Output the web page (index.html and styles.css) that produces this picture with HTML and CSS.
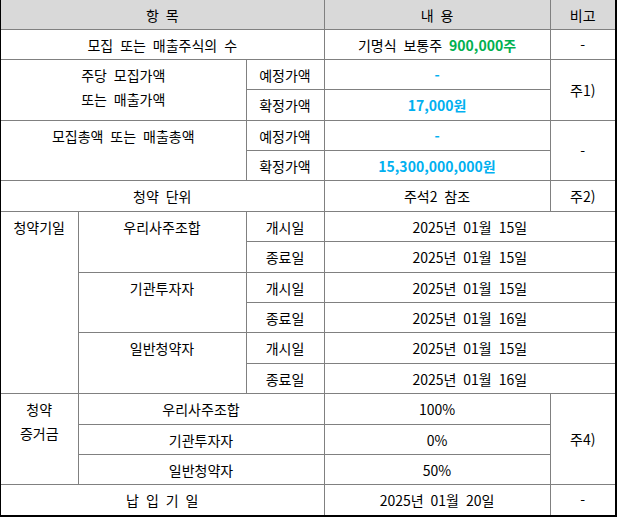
FILE: index.html
```html
<!DOCTYPE html>
<html lang="ko">
<head>
<meta charset="utf-8">
<title>모집 또는 매출에 관한 일반사항</title>
<link rel="stylesheet" href="styles.css">
</head>
<body>
<div class="sheet">
<table class="grid">
  <colgroup>
    <col class="c1"><col class="c2"><col class="c3"><col class="c4"><col class="c5">
  </colgroup>
  <tr class="head">
    <th colspan="3">항 목</th>
    <th>내 용</th>
    <th>비고</th>
  </tr>
  <tr>
    <td colspan="3">모집 또는 매출주식의 수</td>
    <td>기명식 보통주 <span class="green">900,000주</span></td>
    <td>-</td>
  </tr>
  <tr>
    <td colspan="2" rowspan="2">주당 모집가액<br>또는 매출가액</td>
    <td>예정가액</td>
    <td><span class="blue">-</span></td>
    <td rowspan="2" class="mid">주1)</td>
  </tr>
  <tr>
    <td>확정가액</td>
    <td><span class="blue">17,000원</span></td>
  </tr>
  <tr>
    <td colspan="2" rowspan="2">모집총액 또는 매출총액</td>
    <td>예정가액</td>
    <td><span class="blue">-</span></td>
    <td rowspan="2" class="mid">-</td>
  </tr>
  <tr>
    <td>확정가액</td>
    <td><span class="blue">15,300,000,000원</span></td>
  </tr>
  <tr>
    <td colspan="3">청약 단위</td>
    <td>주석2 참조</td>
    <td>주2)</td>
  </tr>
  <tr>
    <td rowspan="6">청약기일</td>
    <td rowspan="2">우리사주조합</td>
    <td>개시일</td>
    <td colspan="2">2025년 01월 15일</td>
  </tr>
  <tr>
    <td>종료일</td>
    <td colspan="2">2025년 01월 15일</td>
  </tr>
  <tr>
    <td rowspan="2">기관투자자</td>
    <td>개시일</td>
    <td colspan="2">2025년 01월 15일</td>
  </tr>
  <tr>
    <td>종료일</td>
    <td colspan="2">2025년 01월 16일</td>
  </tr>
  <tr>
    <td rowspan="2">일반청약자</td>
    <td>개시일</td>
    <td colspan="2">2025년 01월 15일</td>
  </tr>
  <tr>
    <td>종료일</td>
    <td colspan="2">2025년 01월 16일</td>
  </tr>
  <tr>
    <td rowspan="3">청약<br>증거금</td>
    <td colspan="2">우리사주조합</td>
    <td>100%</td>
    <td rowspan="3" class="mid">주4)</td>
  </tr>
  <tr>
    <td colspan="2">기관투자자</td>
    <td>0%</td>
  </tr>
  <tr>
    <td colspan="2">일반청약자</td>
    <td>50%</td>
  </tr>
  <tr>
    <td colspan="3">납 입 기 일</td>
    <td>2025년 01월 20일</td>
    <td>-</td>
  </tr>
</table>
</div>
</body>
</html>
```

FILE: styles.css
```css
html, body {
  margin: 0;
  padding: 0;
  background: #ffffff;
}

.sheet {
  width: 614px;
  border-left: 1px solid #000000;
  border-right: 2px solid #000000;
  border-bottom: 2px solid #000000;
  font-family: "Noto Sans CJK KR", "Noto Sans", sans-serif;
  font-size: 14px;
  color: #000000;
}

.grid {
  width: 614px;
  border-collapse: collapse;
  border-style: hidden;
  table-layout: fixed;
}

.c1 { width: 77px; }
.c2 { width: 168px; }
.c3 { width: 78px; }
.c4 { width: 226px; }
.c5 { width: 65px; }

.grid tr {
  height: 30.4px;
}

.grid tr.head {
  height: 29px;
}

.grid th,
.grid td {
  border: 1px solid #808080;
  padding: 3px 0 0 0;
  text-align: center;
  vertical-align: top;
  line-height: 24px;
  font-weight: 400;
  word-spacing: 3px;
  white-space: nowrap;
  overflow: hidden;
}

.grid th {
  background: #d9d9d9;
}

.grid td.mid {
  vertical-align: middle;
  padding: 0;
}

.green {
  color: #00b050;
  font-weight: 700;
}

.blue {
  color: #00b0f0;
  font-weight: 700;
}
```
